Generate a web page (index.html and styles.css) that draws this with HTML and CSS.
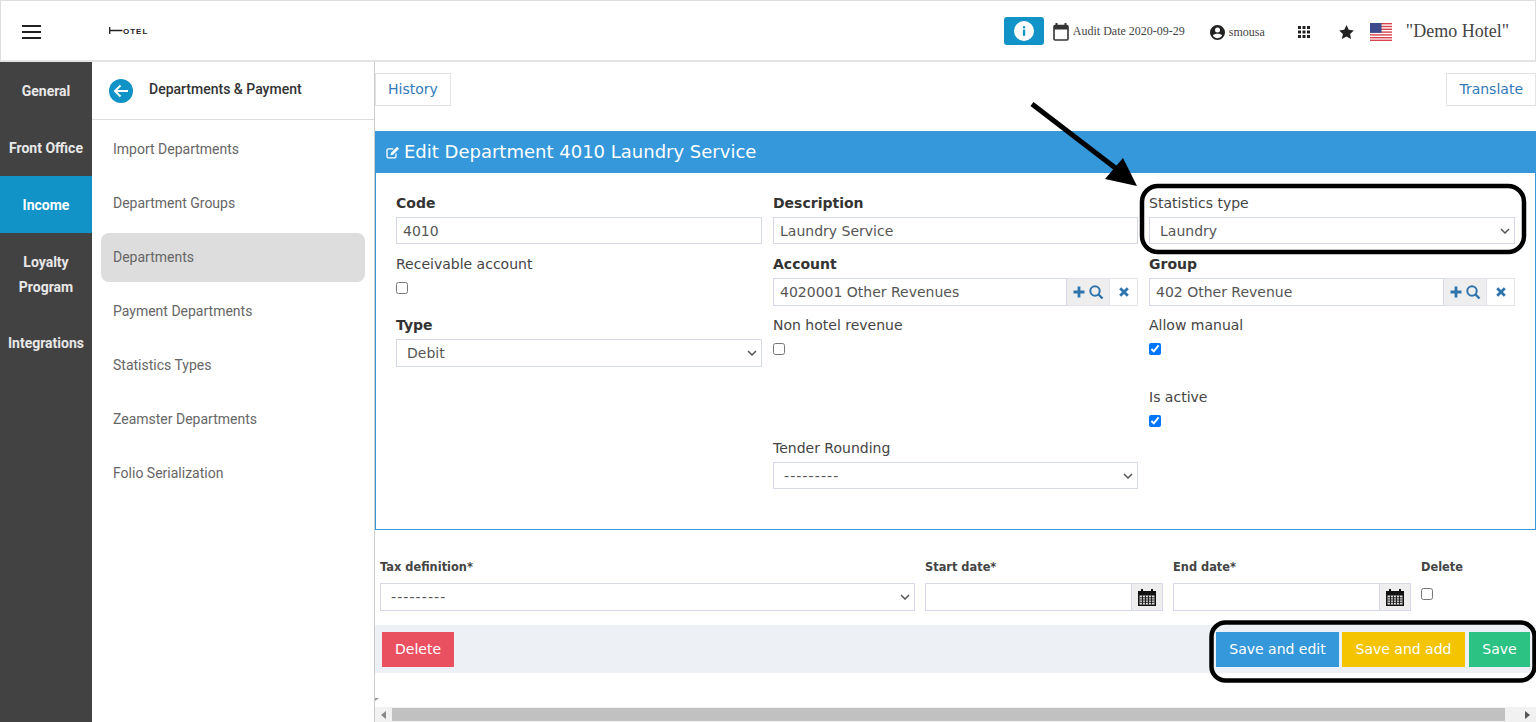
FILE: index.html
```html
<!DOCTYPE html>
<html lang="en">
<head>
<meta charset="utf-8">
<title>Edit Department</title>
<link rel="stylesheet" href="styles.css">
</head>
<body>
<header class="topbar">
  <button class="menu-btn" aria-label="Menu"><svg width="20" height="14" viewBox="0 0 20 14"><path d="M0 1h19M0 7h19M0 13h19" stroke="#212121" stroke-width="2"/></svg></button>
  <div class="logo"><svg width="14" height="8" viewBox="0 0 14 8"><path d="M.7 0v7M.7 3.500h12.800" stroke="#222" stroke-width="1.300" fill="none"/></svg><span class="logo-text">OTEL</span></div>
  <div class="top-right">
    <button class="info-btn" aria-label="Info"><svg width="20" height="20" viewBox="0 0 20 20"><circle cx="10" cy="10" r="10" fill="#fff"/><rect x="8.900" y="8.600" width="2.300" height="6.200" fill="#1193c8"/><rect x="8.900" y="5.200" width="2.300" height="2.200" fill="#1193c8"/></svg></button>
    <svg class="ico-cal" width="16" height="18" viewBox="0 0 16 18"><path d="M3.500 0v3M12.500 0v3" stroke="#333" stroke-width="2"/><rect x="1" y="2.500" width="14" height="14.500" rx="1.200" fill="none" stroke="#333" stroke-width="1.600"/><rect x="1" y="2.500" width="14" height="4" fill="#333"/></svg>
    <span class="audit">Audit Date 2020-09-29</span>
    <svg class="ico-user" width="15" height="15" viewBox="0 0 24 24"><path fill="#222" d="M12 0a12 12 0 1 0 0 24 12 12 0 0 0 0-24zm0 4a4 4 0 1 1 0 8 4 4 0 0 1 0-8zm0 17c-3 0-5.800-1.500-7.400-3.900C4.700 15 9.500 14 12 14s7.300 1 7.400 3.100A8.900 8.900 0 0 1 12 21z"/></svg>
    <span class="user">smousa</span>
    <svg class="ico-apps" width="12" height="12" viewBox="0 0 12 12"><g fill="#222"><rect width="3" height="3"/><rect x="4.500" width="3" height="3"/><rect x="9" width="3" height="3"/><rect y="4.500" width="3" height="3"/><rect x="4.500" y="4.500" width="3" height="3"/><rect x="9" y="4.500" width="3" height="3"/><rect y="9" width="3" height="3"/><rect x="4.500" y="9" width="3" height="3"/><rect x="9" y="9" width="3" height="3"/></g></svg>
    <svg class="ico-star" width="15" height="14" viewBox="0 0 24 23"><path fill="#222" d="M12 0l3.700 7.900 8.300 1-6.100 5.800 1.600 8.300L12 18.900 4.500 23l1.600-8.300L0 8.900l8.300-1z"/></svg>
    <svg class="ico-flag" width="22" height="18" viewBox="0 0 22 18"><rect width="22" height="18" fill="#fff"/><g fill="#d9434e"><rect y="0" width="22" height="1.400"/><rect y="2.800" width="22" height="1.400"/><rect y="5.600" width="22" height="1.400"/><rect y="8.400" width="22" height="1.400"/><rect y="11.200" width="22" height="1.400"/><rect y="14" width="22" height="1.400"/><rect y="16.600" width="22" height="1.400"/></g><rect width="11.500" height="9.800" fill="#3c4a8c"/></svg>
    <span class="hotel">"Demo Hotel"</span>
  </div>
</header>

<div class="layout">
  <nav class="rail">
    <a class="rail-item">General</a>
    <a class="rail-item">Front Office</a>
    <a class="rail-item rail-item--active">Income</a>
    <a class="rail-item rail-item--tall">Loyalty Program</a>
    <a class="rail-item">Integrations</a>
  </nav>

  <aside class="subnav">
    <div class="subnav-head">
      <svg width="24" height="24" viewBox="0 0 24 24"><circle cx="12" cy="12" r="12" fill="#1193c8"/><path d="M19 12H6M11.500 6.500L6 12l5.500 5.500" stroke="#fff" stroke-width="2" fill="none"/></svg>
      <span class="subnav-title">Departments &amp; Payment</span>
    </div>
    <ul class="subnav-list">
      <li class="subnav-item">Import Departments</li>
      <li class="subnav-item">Department Groups</li>
      <li class="subnav-item subnav-item--active">Departments</li>
      <li class="subnav-item">Payment Departments</li>
      <li class="subnav-item">Statistics Types</li>
      <li class="subnav-item">Zeamster Departments</li>
      <li class="subnav-item">Folio Serialization</li>
    </ul>
  </aside>

  <main class="main">
    <div class="toolbar">
      <a class="link-btn">History</a>
      <a class="link-btn">Translate</a>
    </div>

    <section class="panel">
      <h1 class="panel-head">
        <svg class="edit-ico" width="14" height="13" viewBox="0 0 14 13"><path d="M10 7.500v3a1.300 1.300 0 0 1-1.300 1.300H2.300A1.300 1.300 0 0 1 1 10.500V4.200a1.300 1.300 0 0 1 1.300-1.300h5" fill="none" stroke="#fff" stroke-width="1.300"/><path d="M4.500 9.300l.6-2.500 6-6 1.900 1.900-6 6z" fill="#fff"/></svg>
        Edit Department 4010 Laundry Service
      </h1>
      <div class="panel-body">
        <div class="col">
          <div class="field"><label class="lbl lbl--strong">Code</label><input class="ctl" value="4010"></div>
          <div class="field"><label class="lbl">Receivable account</label><input class="chk" type="checkbox"></div>
          <div class="field field--after-chk"><label class="lbl lbl--strong">Type</label><select class="ctl ctl--select ctl--tall"><option>Debit</option></select></div>
        </div>
        <div class="col">
          <div class="field"><label class="lbl lbl--strong">Description</label><input class="ctl" value="Laundry Service"></div>
          <div class="field field--grp"><label class="lbl lbl--strong">Account</label>
            <div class="group"><input class="ctl ctl--grp" value="4020001 Other Revenues">
              <span class="addon addon--grey"><svg width="31" height="14" viewBox="0 0 31 14"><path d="M6 1.500v11M.5 7h11" stroke="#2f75ad" stroke-width="2.800"/><circle cx="22" cy="6" r="4.700" fill="none" stroke="#2f75ad" stroke-width="2"/><path d="M25.500 9.500l4 4" stroke="#2f75ad" stroke-width="2.400"/></svg></span>
              <span class="addon"><svg width="10" height="10" viewBox="0 0 10 10"><path d="M1.200 1.200l7.600 7.600M8.800 1.200L1.200 8.800" stroke="#2f75ad" stroke-width="2.800"/></svg></span>
            </div>
          </div>
          <div class="field"><label class="lbl">Non hotel revenue</label><input class="chk" type="checkbox"></div>
          <div class="field field--tender"><label class="lbl">Tender Rounding</label><select class="ctl ctl--select ctl--dash"><option>---------</option></select></div>
        </div>
        <div class="col">
          <div class="field"><label class="lbl">Statistics type</label><select class="ctl ctl--select"><option>Laundry</option></select></div>
          <div class="field field--grp"><label class="lbl lbl--strong">Group</label>
            <div class="group"><input class="ctl ctl--grp" value="402 Other Revenue">
              <span class="addon addon--grey"><svg width="31" height="14" viewBox="0 0 31 14"><path d="M6 1.500v11M.5 7h11" stroke="#2f75ad" stroke-width="2.800"/><circle cx="22" cy="6" r="4.700" fill="none" stroke="#2f75ad" stroke-width="2"/><path d="M25.500 9.500l4 4" stroke="#2f75ad" stroke-width="2.400"/></svg></span>
              <span class="addon"><svg width="10" height="10" viewBox="0 0 10 10"><path d="M1.200 1.200l7.600 7.600M8.800 1.200L1.200 8.800" stroke="#2f75ad" stroke-width="2.800"/></svg></span>
            </div>
          </div>
          <div class="field"><label class="lbl">Allow manual</label><input class="chk" type="checkbox" checked></div>
          <div class="field field--active"><label class="lbl">Is active</label><input class="chk" type="checkbox" checked></div>
        </div>
      </div>
    </section>

    <div class="tax-row">
      <div class="tax-cell"><label class="tax-lbl">Tax definition*</label><select class="ctl ctl--select ctl--tall ctl--dash"><option>---------</option></select></div>
      <div class="tax-cell"><label class="tax-lbl">Start date*</label>
        <div class="group"><input class="ctl ctl--grp"><span class="addon addon--grey addon--date"><svg width="18" height="18" viewBox="0 0 18 18"><path fill="#111" d="M0 3h3V1h2v2h8V1h2v2h3v15H0z"/><path d="M1.500 7.500h15v9h-15z" fill="#ddd"/><path d="M1.500 9.800h15M1.500 12h15M1.500 14.300h15M4.500 7.500v9M7.500 7.500v9M10.500 7.500v9M13.500 7.500v9" stroke="#111" stroke-width=".9"/></svg></span></div>
      </div>
      <div class="tax-cell"><label class="tax-lbl">End date*</label>
        <div class="group"><input class="ctl ctl--grp"><span class="addon addon--grey addon--date"><svg width="18" height="18" viewBox="0 0 18 18"><path fill="#111" d="M0 3h3V1h2v2h8V1h2v2h3v15H0z"/><path d="M1.500 7.500h15v9h-15z" fill="#ddd"/><path d="M1.500 9.800h15M1.500 12h15M1.500 14.300h15M4.500 7.500v9M7.500 7.500v9M10.500 7.500v9M13.500 7.500v9" stroke="#111" stroke-width=".9"/></svg></span></div>
      </div>
      <div class="tax-cell"><label class="tax-lbl">Delete</label><input class="chk chk--tax" type="checkbox"></div>
    </div>

    <div class="actions">
      <button class="btn btn--red">Delete</button>
      <div class="actions-right">
        <button class="btn btn--blue">Save and edit</button>
        <button class="btn btn--yellow">Save and add</button>
        <button class="btn btn--green">Save</button>
      </div>
    </div>

    <div class="scrollbar">
      <span class="scroll-arrow"><svg width="5" height="8" viewBox="0 0 5 8"><path d="M5 0v8L0 4z" fill="#888"/></svg></span>
      <span class="scroll-thumb"></span>
      <span class="scroll-arrow"><svg width="5" height="8" viewBox="0 0 5 8"><path d="M0 0v8l5-4z" fill="#555"/></svg></span>
    </div>
  </main>
</div>

<svg class="annot" width="1536" height="722" viewBox="0 0 1536 722" aria-hidden="true">
  <path d="M375 698h4l-4 3z" fill="#999"/>
  <path d="M1032 104L1118 170" stroke="#000" stroke-width="5" fill="none"/>
  <path d="M1137 186L1123 158L1105 179z" fill="#000"/>
  <rect x="1142" y="186" width="382" height="66" rx="16" fill="none" stroke="#000" stroke-width="4.500"/>
  <rect x="1211.500" y="622.500" width="323" height="58" rx="14" fill="none" stroke="#000" stroke-width="4.500"/>
</svg>
</body>
</html>
```

FILE: styles.css
```css
* { box-sizing: border-box; }
html, body { margin: 0; height: 722px; overflow: hidden; background: #fff; }
body { font-family: "DejaVu Sans", sans-serif; font-size: 14px; color: #444; position: relative; }

.topbar { height: 62px; padding-top: 2px; display: flex; align-items: center; border: 1px solid #ddd; border-bottom-width: 2px; border-color: #ddd #ddd #e4e4e4 #ddd; background: #fff; }
.menu-btn { margin-left: 21px; width: 20px; height: 14px; padding: 0; border: 0; background: none; display: flex; }
.logo { margin-left: 67px; display: flex; align-items: center; margin-top: -1px; }
.logo-text { font-family: "Liberation Sans", sans-serif; font-weight: 700; font-size: 8px; letter-spacing: 1px; color: #222; }
.top-right { margin-left: auto; display: flex; align-items: center; font-family: "Liberation Serif", serif; color: #444; }
.info-btn { width: 40px; height: 28px; margin-top: -2px; padding: 0; border: 0; border-radius: 3px; background: #1193c8; display: flex; align-items: center; justify-content: center; }
.ico-cal { margin-left: 9px; }
.audit { margin-left: 4px; font-size: 12px; width: 137px; }
.user { margin-left: 4px; font-size: 12px; width: 69px; margin-top: 1px; }
.ico-user { display: block; margin-top: 1px; }
.ico-apps { margin-top: 1px; }
.ico-star { margin-left: 29px; margin-top: 1px; }
.ico-flag { margin-left: 16px; }
.hotel { margin-left: 14px; margin-right: 26px; font-size: 18px; }

.layout { display: flex; height: 660px; }

.rail { width: 92px; flex: none; background: #424242; font-family: Roboto, sans-serif; font-weight: 700; font-size: 14px; color: #e8e8e8; }
.rail-item { display: flex; align-items: center; justify-content: center; text-align: center; height: 57px; line-height: 25px; padding-top: 2px; }
.rail-item--active { background: #1193c8; color: #fff; }
.rail-item--tall { height: 81px; padding: 2px 14px 0; }

.subnav { width: 283px; flex: none; border-right: 1px solid #ccc; font-family: Roboto, sans-serif; }
.subnav-head { height: 58px; display: flex; align-items: center; padding-left: 17px; border-bottom: 1px solid #ddd; }
.subnav-title { margin-left: 16px; font-weight: 500; font-size: 14px; color: #333; margin-top: -3px; }
.subnav-list { list-style: none; margin: 0; padding: 2px 9px 0 9px; }
.subnav-item { height: 54px; display: flex; align-items: center; padding-left: 12px; font-size: 14px; color: #666; }
.subnav-item--active { height: 49px; margin: 3px 0 2px; padding-bottom: 1px; background: #ddd; border-radius: 8px; }

.main { flex: 1; min-width: 0; display: flex; flex-direction: column; }
.toolbar { display: flex; justify-content: space-between; padding-top: 11px; height: 69px; }
.link-btn { height: 33px; padding: 0 12px 2px; display: flex; align-items: center; border: 1px solid #e3e3e3; color: #337ab7; background: #fff; font-size: 14px; }

.panel { border: 1px solid #3498db; border-top: 0; height: 399px; }
.panel-head { margin: 0 -1px; height: 42px; background: #3498db; color: #fff; font-size: 18px; font-weight: 400; display: flex; align-items: center; gap: 4px; padding: 0 0 2px 11px; }
.edit-ico { margin-top: 3px; }
.panel-body { display: grid; grid-template-columns: 366px 365px 366px; column-gap: 11px; padding: 20px 0 0 20px; }
.col { display: flex; flex-direction: column; min-width: 0; }
.field { margin-bottom: 10px; }
.field--grp { margin-bottom: 9px; }
.lbl { display: block; height: 20px; line-height: 20px; margin-bottom: 4px; color: #444; }
.lbl--strong { font-weight: 700; color: #333; }
.ctl { display: block; width: 100%; height: 27px; border: 1px solid #d5d9e6; background: #fff; color: #555; font-family: "DejaVu Sans", sans-serif; font-size: 14px; padding: 0 6px; border-radius: 0; outline: 0; }
.ctl--select { appearance: none; padding: 0 24px 0 10px; background: #fff url("data:image/svg+xml,%3Csvg xmlns='http://www.w3.org/2000/svg' width='10' height='6' viewBox='0 0 10 6'%3E%3Cpath d='M1 1l4 4 4-4' fill='none' stroke='%23555' stroke-width='1.500'/%3E%3C/svg%3E") no-repeat right 4px center; }
.ctl--tall { height: 28px; }
.ctl--dash { letter-spacing: 1.100px; }
.chk { display: block; width: 12px; height: 12px; margin: 8px 0 0; }
.field--after-chk { margin-top: 11px; }
.field--tender { margin-top: 73px; }
.field--active { margin-top: 22px; }

.group { display: flex; height: 28px; }
.ctl--grp { flex: 1; min-width: 0; height: 28px; }
.addon { flex: none; width: 28px; display: flex; align-items: center; justify-content: center; border: 1px solid #e2e4ec; border-left: 0; background: #fff; }
.addon--grey { width: 43px; background: #eee; }
.addon--date { width: 31px; border-color: #d5d9e6; }

.tax-row { display: grid; grid-template-columns: 535px 238px 238px auto; column-gap: 10px; padding: 26px 0 0 5px; height: 95px; }
.tax-lbl { display: block; height: 20px; line-height: 22px; margin-bottom: 7px; font-size: 11.400px; font-weight: 700; color: #444; }
.chk--tax { margin-top: 12px; }

.actions { height: 48px; background: #edf0f5; display: flex; justify-content: space-between; align-items: flex-start; padding: 7px 6px 0 7px; }
.actions-right { display: flex; gap: 3px; }
.btn { height: 35px; border: 1px solid transparent; padding: 0 0 2px; color: #fff; font-family: "DejaVu Sans", sans-serif; font-size: 14px; }
.btn--red { width: 72px; background: #ea5160; }
.btn--blue { width: 123px; background: #3498db; }
.btn--yellow { width: 123px; background: #f4c400; }
.btn--green { width: 61px; margin-left: 1px; background: #2bc283; }

.scrollbar { margin-top: auto; height: 15px; display: flex; align-items: center; background: #f1f1f1; flex: none; }
.scroll-arrow { width: 17px; flex: none; display: flex; justify-content: center; }
.scroll-thumb { flex: 1; height: 13px; background: #c1c1c1; margin-right: 14px; }

.annot { position: absolute; left: 0; top: 0; pointer-events: none; }
```
